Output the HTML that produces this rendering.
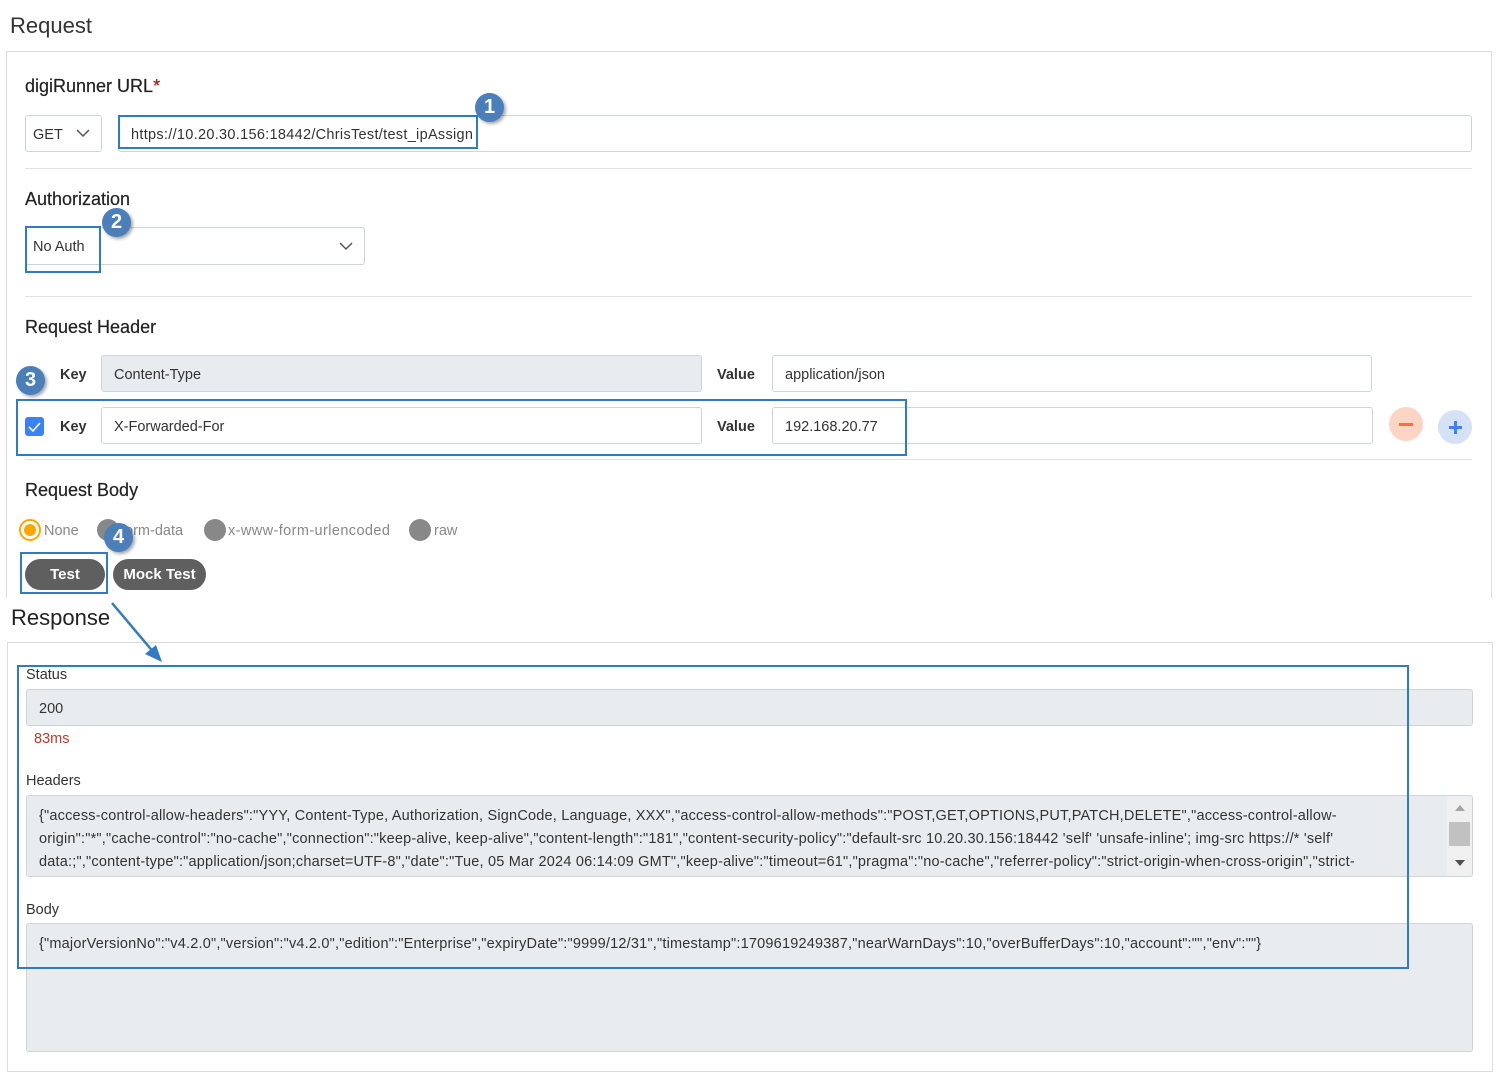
<!DOCTYPE html>
<html><head><meta charset="utf-8"><style>
*{box-sizing:border-box;margin:0;padding:0}
body{width:1497px;height:1076px;background:#fff;font-family:"Liberation Sans",sans-serif;color:#212529;position:relative;overflow:hidden}
.a{position:absolute}
.inp{position:absolute;border:1px solid #ced4da;border-radius:3px;background:#fff;font-size:14.5px;color:#333;padding-left:12px;padding-top:2px;display:flex;align-items:center}
.g{background:#e9ecef}
.hr{position:absolute;height:1px;background:#e2e2e2}
.h{position:absolute;font-size:18px;color:#222;-webkit-text-stroke:0.2px #222}
.box{position:absolute;border:2.5px solid #2f7bc4}
.num{position:absolute;width:29px;height:29px;border-radius:50%;background:#4a7fba;color:#fff;font-weight:bold;font-size:20px;text-align:center;line-height:29px;box-shadow:2px 2px 3px rgba(0,0,0,.35)}
.rad{position:absolute;width:22px;height:22px;border-radius:50%;background:#888}
.btn{position:absolute;background:#5f5f5f;color:#fff;font-weight:bold;font-size:15px;border-radius:16px;text-align:center;line-height:32px;height:31px}
.lbl{position:absolute;font-size:14.5px;color:#333}
.mono{font-size:14.5px;color:#333;line-height:23px;letter-spacing:0.2px}
</style></head><body>
<div class="a" style="left:10px;top:13px;font-size:22px;color:#333">Request</div>
<div class="a" style="left:6px;top:51px;width:1486px;height:560px;border:1px solid #ddd;border-bottom:none"></div>
<div class="h" style="left:25px;top:76px">digiRunner URL<span style="color:#e00">*</span></div>
<div class="inp" style="left:25px;top:115px;width:77px;height:37px;padding-left:7px">GET<svg class="a" style="left:50px;top:13px" width="14" height="9"><path d="M1 1l6 6 6-6" fill="none" stroke="#555" stroke-width="1.5"/></svg></div>
<div class="inp" style="left:118px;top:115px;width:1354px;height:37px;letter-spacing:0.3px">https://10.20.30.156:18442/ChrisTest/test_ipAssign</div>
<div class="hr" style="left:25px;top:168px;width:1447px"></div>
<div class="h" style="left:25px;top:189px">Authorization</div>
<div class="inp" style="left:25px;top:227px;width:340px;height:38px;padding-left:7px">No Auth<svg class="a" style="left:313px;top:14px" width="14" height="9"><path d="M1 1l6 6 6-6" fill="none" stroke="#555" stroke-width="1.5"/></svg></div>
<div class="hr" style="left:25px;top:296px;width:1447px"></div>
<div class="h" style="left:25px;top:317px">Request Header</div>
<div class="lbl" style="left:60px;top:367px;font-weight:bold">Key</div>
<div class="inp g" style="left:101px;top:355px;width:601px;height:37px">Content-Type</div>
<div class="lbl" style="left:717px;top:367px;font-weight:bold">Value</div>
<div class="inp" style="left:772px;top:355px;width:600px;height:37px">application/json</div>
<div class="a" style="left:25px;top:417px;width:19px;height:19px;background:#3b82f6;border-radius:3px"><svg width="19" height="19"><path d="M4 10l4 4 7-8" fill="none" stroke="#fff" stroke-width="1.6"/></svg></div>
<div class="lbl" style="left:60px;top:419px;font-weight:bold">Key</div>
<div class="inp" style="left:101px;top:407px;width:601px;height:37px">X-Forwarded-For</div>
<div class="lbl" style="left:717px;top:419px;font-weight:bold">Value</div>
<div class="inp" style="left:772px;top:407px;width:601px;height:37px">192.168.20.77</div>
<div class="a" style="left:1389px;top:407px;width:34px;height:34px;border-radius:50%;background:#fdd5c5"><div class="a" style="left:10px;top:16px;width:14px;height:3px;background:#f0714a"></div></div>
<div class="a" style="left:1438px;top:410px;width:34px;height:34px;border-radius:50%;background:#d5e1f5"><div class="a" style="left:11px;top:16px;width:13px;height:3px;background:#3b82f6"></div><div class="a" style="left:16px;top:11px;width:3px;height:13px;background:#3b82f6"></div></div>
<div class="hr" style="left:25px;top:459px;width:1447px"></div>
<div class="h" style="left:25px;top:480px">Request Body</div>
<div class="a" style="left:19px;top:519px;width:22px;height:22px;border-radius:50%;border:2px solid #ffa500;background:#fff"><div class="a" style="left:3px;top:3px;width:12px;height:12px;border-radius:50%;background:#ffa500"></div></div>
<div class="lbl" style="left:44px;top:523px;color:#888">None</div>
<div class="rad" style="left:97px;top:519px"></div>
<div class="lbl" style="left:121px;top:523px;color:#888">form-data</div>
<div class="rad" style="left:204px;top:519px"></div>
<div class="lbl" style="left:228px;top:523px;color:#888;letter-spacing:0.4px">x-www-form-urlencoded</div>
<div class="rad" style="left:409px;top:519px"></div>
<div class="lbl" style="left:434px;top:523px;color:#888">raw</div>
<div class="btn" style="left:25px;top:559px;width:80px">Test</div>
<div class="btn" style="left:113px;top:559px;width:93px">Mock Test</div>
<div class="a" style="left:0;top:598px;width:1497px;height:44px;background:#fff"></div>
<div class="a" style="left:11px;top:605px;font-size:22px;color:#222">Response</div>
<div class="a" style="left:7px;top:642px;width:1486px;height:430px;border:1px solid #ddd"></div>
<div class="lbl" style="left:26px;top:667px">Status</div>
<div class="inp g" style="left:26px;top:689px;width:1447px;height:37px">200</div>
<div class="lbl" style="left:34px;top:731px;color:#c0392b">83ms</div>
<div class="lbl" style="left:26px;top:773px">Headers</div>
<div class="inp g" style="left:26px;top:795px;width:1447px;height:82px;display:block;padding-top:9px;overflow:hidden"><div class="mono" style="width:1400px">{"access-control-allow-headers":"YYY, Content-Type, Authorization, SignCode, Language, XXX","access-control-allow-methods":"POST,GET,OPTIONS,PUT,PATCH,DELETE","access-control-allow-<br>origin":"*","cache-control":"no-cache","connection":"keep-alive, keep-alive","content-length":"181","content-security-policy":"default-src 10.20.30.156:18442 'self' 'unsafe-inline'; img-src https://* 'self'<br>data:;","content-type":"application/json;charset=UTF-8","date":"Tue, 05 Mar 2024 06:14:09 GMT","keep-alive":"timeout=61","pragma":"no-cache","referrer-policy":"strict-origin-when-cross-origin","strict-</div>
<div class="a" style="left:1420px;top:0;width:26px;height:82px;background:#f0f0f0"><svg class="a" style="left:8px;top:9px" width="10" height="6"><path d="M0 6L5 0l5 6z" fill="#a3a3a3"/></svg><div class="a" style="left:2px;top:26px;width:21px;height:24px;background:#c1c1c1"></div><svg class="a" style="left:8px;top:64px" width="10" height="6"><path d="M0 0h10L5 6z" fill="#505050"/></svg></div></div>
<div class="lbl" style="left:26px;top:902px">Body</div>
<div class="inp g" style="left:26px;top:923px;width:1447px;height:129px;display:block;padding-top:9px"><div class="mono">{"majorVersionNo":"v4.2.0","version":"v4.2.0","edition":"Enterprise","expiryDate":"9999/12/31","timestamp":1709619249387,"nearWarnDays":10,"overBufferDays":10,"account":"","env":""}</div></div>
<div class="box" style="left:118px;top:115px;width:360px;height:34px"></div>
<div class="box" style="left:25px;top:226px;width:76px;height:47px"></div>
<div class="box" style="left:16px;top:399px;width:891px;height:57px"></div>
<div class="box" style="left:20px;top:552px;width:88px;height:42px"></div>
<div class="box" style="left:17px;top:665px;width:1392px;height:304px"></div>
<svg class="a" style="left:0;top:0" width="1497" height="1076"><path d="M112 603L155 654" stroke="#2f7bc4" stroke-width="2.5"/><path d="M162 662l-17-8 11-9z" fill="#2f7bc4"/></svg>
<div class="num" style="left:475px;top:93px">1</div>
<div class="num" style="left:102px;top:208px">2</div>
<div class="num" style="left:16px;top:366px">3</div>
<div class="num" style="left:104px;top:523px">4</div>
</body></html>
